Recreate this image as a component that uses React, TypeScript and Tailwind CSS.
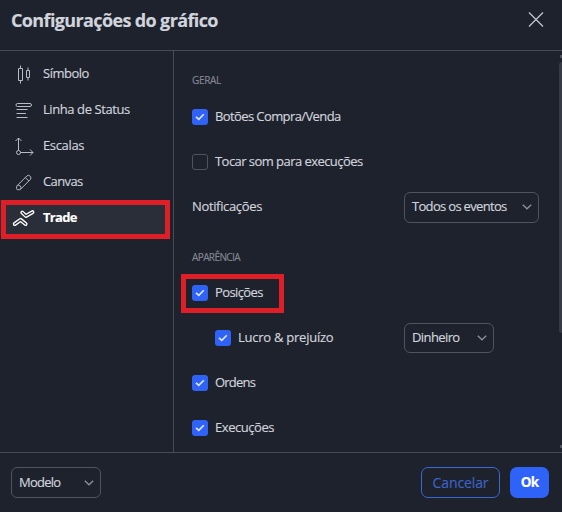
import type { ReactNode } from 'react';

function Chevron() {
  return (
    <svg width="10" height="6" viewBox="0 0 10 6" fill="none" stroke="#8c909b" strokeWidth="1.3" className="shrink-0">
      <path d="M.8 .8 5 4.8 9.2 .8" />
    </svg>
  );
}

function Select({ className, children }: { className: string; children: ReactNode }) {
  return (
    <button
      className={`flex items-center justify-between rounded-[6px] border border-[#50535e] pl-[7px] pr-[6px] whitespace-nowrap ${className}`}
    >
      {children}
      <Chevron />
    </button>
  );
}

function Checkbox({ checked = true }: { checked?: boolean }) {
  if (!checked) {
    return <span className="h-4 w-4 shrink-0 rounded-[3px] border border-[#50535e]" />;
  }
  return (
    <span className="flex h-4 w-4 shrink-0 items-center justify-center rounded-[3px] bg-[#2f62f6]">
      <svg width="10" height="8" viewBox="0 0 10 8" fill="none" stroke="#dfe7ff" strokeWidth="1.6">
        <path d="M1 3.8 3.8 6.4 8.8 1.2" />
      </svg>
    </span>
  );
}

function Option({ label, tracking, checked }: { label: string; tracking: string; checked?: boolean }) {
  return (
    <label className="flex items-center gap-[7px]">
      <Checkbox checked={checked} />
      <span className={`whitespace-nowrap ${tracking}`}>{label}</span>
    </label>
  );
}

const tabs = [
  {
    label: 'Símbolo',
    tracking: 'tracking-[-0.5px]',
    icon: <path d="M10.5 5.5v3M10.5 20.5v3M8.5 8.5h4v12h-4zM18 7.5v3M18 17.5v3M16.5 10.5h3v7h-3z" />,
  },
  {
    label: 'Linha de Status',
    tracking: 'tracking-[-0.42px]',
    icon: (
      <>
        <rect x="6" y="7.5" width="15.5" height="3" rx="1.5" />
        <path d="M6.5 13.5h11M6.5 17.5H16M6.5 21.5h11" />
      </>
    ),
  },
  {
    label: 'Escalas',
    tracking: 'tracking-[-0.35px]',
    icon: (
      <>
        <circle cx="8.5" cy="20.5" r="2" />
        <path d="M8.5 18.5V6M5.5 9l3-3 3 3M10.5 20.5h12.5M20 17.5l3 3-3 3" />
      </>
    ),
  },
  {
    label: 'Canvas',
    tracking: 'tracking-[-0.6px]',
    icon: (
      <path d="M7 17.8 16.8 8a2.2 2.2 0 0 1 3.1 0l.4.4a2.2 2.2 0 0 1 0 3.1l-9.8 9.8a1.5 1.5 0 0 1-1 .4H7.6a1 1 0 0 1-1-1v-1.9a1.5 1.5 0 0 1 .4-1zM15.3 9.5l3.5 3.5M7 17.8a2.5 2.5 0 0 1 3.5 3.5" />
    ),
  },
  {
    label: 'Trade',
    tracking: 'tracking-[-0.7px]',
    active: true,
    icon: (
      <>
        <path d="M12.3 8.6 15.9 11.9 22.4 8.2M4.8 20 10.6 15.9 15.6 20" strokeWidth="4" strokeLinecap="round" />
        <path
          d="M12.3 8.6 15.9 11.9 22.4 8.2M4.8 20 10.6 15.9 15.6 20"
          stroke="#2a2e39"
          strokeWidth="1.3"
          strokeLinecap="round"
        />
      </>
    ),
  },
];

export default function App() {
  return (
    <div className="flex h-[512px] w-[562px] flex-col overflow-hidden bg-[#1e222d] font-['Open_Sans','Noto_Sans',sans-serif] text-[13px] font-medium text-[#d1d4dc] [-webkit-text-stroke:0.15px]">
      <header className="flex h-[51px] shrink-0 items-center justify-between border-b border-[#484b56] pr-[18px] pb-[10px] pl-[11px]">
        <h1 className="text-[18px] font-bold tracking-[-0.63px] whitespace-nowrap">Configurações do gráfico</h1>
        <svg width="16" height="16" viewBox="0 0 16 16" stroke="#c5c8d0" strokeWidth="1.2">
          <path d="M1 .5l14 14M15 .5 1 14.5" />
        </svg>
      </header>

      <main className="flex h-[401px] shrink-0">
        <nav className="relative w-[174px] shrink-0 border-r border-[#484b56] pt-[5px]">
          {tabs.map((tab) => (
            <div
              key={tab.label}
              className={`flex h-9 items-center gap-[5px] pl-[10px] ${tab.active ? 'mr-[5px] bg-[#2a2e39] font-bold text-white' : ''}`}
            >
              <svg
                width="28"
                height="28"
                viewBox="0 0 28 28"
                fill="none"
                stroke={tab.active ? '#ffffff' : '#b8bbc4'}
                strokeWidth="1"
                strokeLinejoin="round"
              >
                {tab.icon}
              </svg>
              <span className={`whitespace-nowrap ${tab.tracking}`}>{tab.label}</span>
            </div>
          ))}
          <div className="absolute top-[149px] left-px h-[39px] w-[169px] border-5 border-[#de1f27]" />
        </nav>

        <section className="relative flex flex-1 flex-col gap-px pl-[18px]">
          <h2 className="h-[43px] pt-[21px] text-[10px] leading-4 font-normal tracking-[-0.3px] text-[#848791]">GERAL</h2>
          <div className="flex h-11 items-center">
            <Option label="Botões Compra/Venda" tracking="tracking-[-0.6px]" />
          </div>
          <div className="flex h-11 items-center">
            <Option label="Tocar som para execuções" tracking="tracking-[-0.55px]" checked={false} />
          </div>
          <div className="flex h-11 items-center">
            <span className="w-[212px] tracking-[-0.35px]">Notificações</span>
            <Select className="h-[31px] w-[135px] tracking-[-0.68px]">Todos os eventos</Select>
          </div>
          <h2 className="h-10 pt-[19px] text-[10px] leading-4 font-normal tracking-[-0.6px] text-[#848791]">APARÊNCIA</h2>
          <div className="relative flex h-11 items-center">
            <Option label="Posições" tracking="tracking-[-0.6px]" />
            <div className="absolute top-[3px] -left-[11px] h-[39px] w-[103px] border-5 border-[#de1f27]" />
          </div>
          <div className="flex h-11 items-center">
            <div className="w-[212px] pl-[23px]">
              <Option label="Lucro & prejuízo" tracking="tracking-[-0.25px]" />
            </div>
            <Select className="h-[30px] w-[90px] tracking-[-0.6px]">Dinheiro</Select>
          </div>
          <div className="flex h-11 items-center">
            <Option label="Ordens" tracking="tracking-[-0.8px]" />
          </div>
          <div className="flex h-11 items-center">
            <Option label="Execuções" tracking="tracking-[-0.45px]" />
          </div>

          <div className="absolute top-[11px] right-0 h-[271px] w-[3px] rounded-l-sm bg-[#363a45]" />
          <div className="absolute top-1 right-0 h-[3px] w-[2px] bg-[#50535e]" />
          <div className="absolute right-0 bottom-1 h-[3px] w-[2px] bg-[#50535e]" />
        </section>
      </main>

      <footer className="flex flex-1 items-start border-t border-[#484b56] px-[11px] pt-[14px]">
        <Select className="h-[31px] w-[90px] tracking-[-0.75px]">Modelo</Select>
        <button className="ml-auto h-[31px] w-[79px] rounded-[7px] border border-[#3a66d6] text-[14px] tracking-[-0.1px] text-[#3d63c9]">
          Cancelar
        </button>
        <button className="mr-[2px] ml-[10px] h-[31px] w-[39px] rounded-[7px] bg-[#2f62f6] text-[13.5px] font-bold tracking-[-0.9px] text-white">
          Ok
        </button>
      </footer>
    </div>
  );
}
